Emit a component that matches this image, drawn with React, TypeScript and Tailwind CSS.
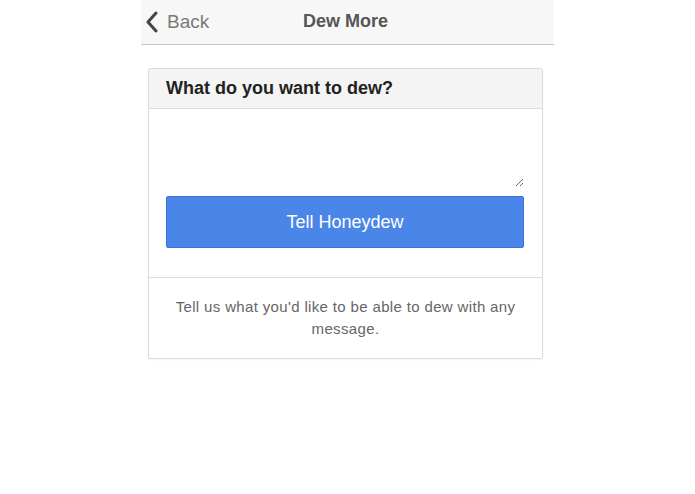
import React from "react";

const App: React.FC = () => {
  return (
    <div className="min-h-screen bg-white" style={{ fontFamily: '"Liberation Sans", Arial, sans-serif' }}>
      <div className="mx-auto w-[413px]">
        {/* Nav bar */}
        <div className="relative flex h-[45px] items-center justify-center border-b border-[#c8c8c8] bg-[#f7f7f7]">
          <button className="absolute left-[4px] top-[8px] flex items-center gap-[8px] text-[19px] text-[#7a7a7a]">
            <svg width="14" height="22" viewBox="0 0 14 22" fill="none">
              <path d="M11 2 L3 11 L11 20" stroke="#444" strokeWidth="3" strokeLinecap="round" strokeLinejoin="round" />
            </svg>
            Back
          </button>
          <h1 className="-ml-[4px] mt-[-2px] text-[18px] font-bold text-[#555]">Dew More</h1>
        </div>

        {/* Card */}
        <div className="ml-[7px] mt-[23px] w-[395px] rounded-[2px] border border-[#dcdcdc] shadow-[0_1px_2px_rgba(0,0,0,0.05)]">
          <div className="flex h-[40px] items-center border-b border-[#dcdcdc] bg-[#f4f4f4] px-[17px]">
            <h2 className="text-[18px] font-bold text-[#222]">What do you want to dew?</h2>
          </div>
          <div className="pl-[17px] pr-[18px] pt-[2px] pb-[29px]">
            <textarea className="block h-[76px] w-full resize-y border-0 bg-white p-2 text-[15px] outline-none" />
            <button className="mt-[9px] h-[52px] w-full rounded-[2px] border border-[#3b74d4] bg-[#4a86e8] text-[18px] text-white">
              Tell Honeydew
            </button>
          </div>
          <div className="border-t border-[#dcdcdc] px-[18px] pt-[18px] pb-[18px] text-center text-[15px] leading-[22px] tracking-[0.35px] text-[#666]">
            Tell us what you'd like to be able to dew with any message.
          </div>
        </div>
      </div>
    </div>
  );
};

export default App;
